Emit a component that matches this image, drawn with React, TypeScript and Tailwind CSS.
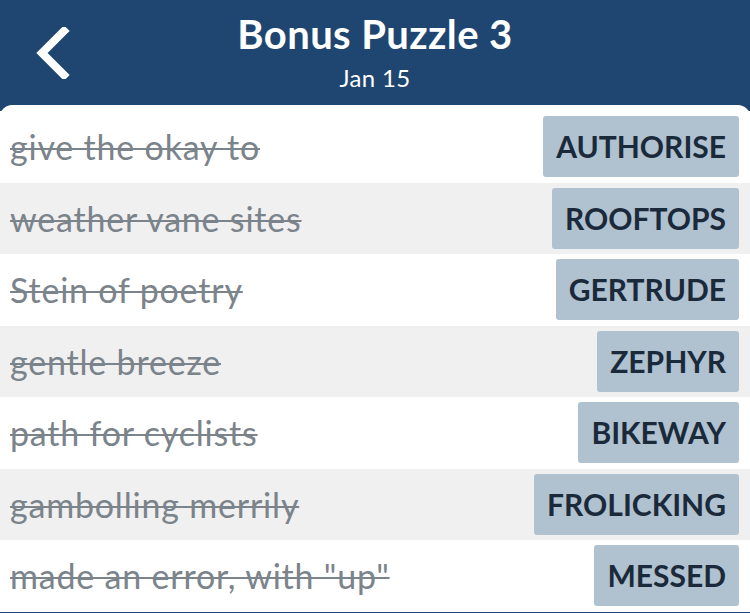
const rows = [
  { clue: "give the okay to", answer: "AUTHORISE" },
  { clue: "weather vane sites", answer: "ROOFTOPS" },
  { clue: "Stein of poetry", answer: "GERTRUDE" },
  { clue: "gentle breeze", answer: "ZEPHYR" },
  { clue: "path for cyclists", answer: "BIKEWAY" },
  { clue: "gambolling merrily", answer: "FROLICKING" },
  { clue: 'made an error, with "up"', answer: "MESSED" },
];

export default function App() {
  return (
    <div className="h-[613px] w-[750px] overflow-hidden bg-[#1f4670] font-['Lato',sans-serif]">
      <header className="relative flex h-[105px] flex-col items-center">
        <button className="absolute left-[34px] top-[27px] text-white" aria-label="Back">
          <svg width="36" height="52" viewBox="0 0 36 52" fill="none">
            <path d="M30 4 L8 26 L30 48" stroke="currentColor" strokeWidth="8" strokeLinecap="square" />
          </svg>
        </button>
        <h1 className="mt-[10px] text-[40px] font-bold leading-[48px] tracking-[0.4px] text-white">Bonus Puzzle 3</h1>
        <div className="mt-[6px] text-[24px] leading-[28px] tracking-[0.3px] text-white">Jan 15</div>
      </header>

      <div className="rounded-t-[12px] bg-white pt-[6px]">
        {rows.map((r, i) => (
          <div
            key={r.answer}
            className={`flex h-[71.5px] items-center justify-between pl-[10px] pr-[11px] ${
              i % 2 === 1 ? "bg-[#f0f0f0]" : "bg-white"
            }`}
          >
            <span className="text-[34px] tracking-[0.8px] text-[#7b838b] line-through decoration-[2px]">
              {r.clue}
            </span>
            <span className="flex h-[61px] items-center rounded-[3px] bg-[#b0c1d0] px-[13px] text-[30px] font-bold text-[#1b2a3a]">
              {r.answer}
            </span>
          </div>
        ))}
      </div>
    </div>
  );
}
